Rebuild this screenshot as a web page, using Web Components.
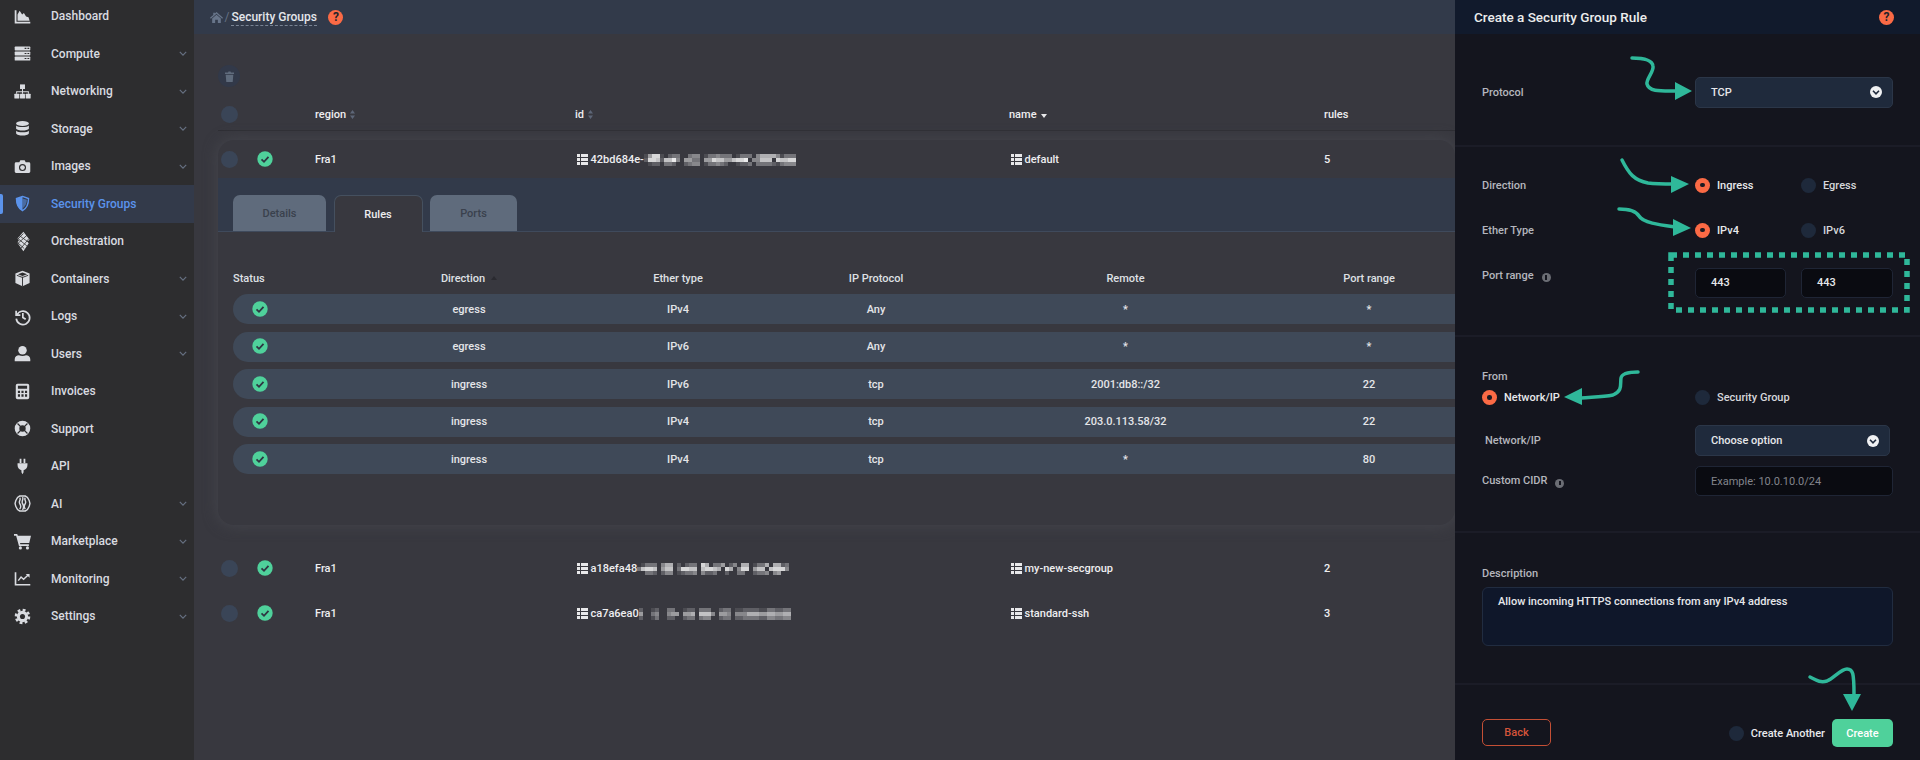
<!DOCTYPE html>
<html>
<head>
<meta charset="utf-8">
<title>Security Groups</title>
<style>
  html, body { margin: 0; background: #38383f; }
  body { font-family: Roboto, "Liberation Sans", sans-serif; overflow: hidden; }
</style>
</head>
<body>
<app-shell></app-shell>
<script>
const ICONS = {
  dashboard: '<path d="M1 3h2.500v16.500H23V22H1z"/><path d="M5 18V9l3-5 3.500 5 2.500-2 3 5 3.500 1 1.500 5z"/>',
  compute: '<rect x="1" y="2" width="22" height="5.600" rx="1"/><rect x="1" y="9.200" width="22" height="5.600" rx="1"/><rect x="1" y="16.400" width="22" height="5.600" rx="1"/><path fill="#2d2d2f" d="M15 4h2.500v1.500H15zM19 4h2.500v1.500H19zM15 11.200h2.500v1.500H15zM19 11.200h2.500v1.500H19zM15 18.400h2.500v1.500H15zM19 18.400h2.500v1.500H19z"/>',
  networking: '<rect x="8.500" y="2" width="7" height="6.500"/><path d="M11.300 8h1.400v3.500h8.300V15h-1.400v-2.100h-6.900V15h-1.400v-2.100H4.400V15H3v-3.500h8.300z"/><rect x=".5" y="15" width="7" height="7" rx=".8"/><rect x="8.500" y="15" width="7" height="7" rx=".8"/><rect x="16.500" y="15" width="7" height="7" rx=".8"/>',
  storage: '<ellipse cx="12" cy="5" rx="9" ry="3.600"/><path d="M3 7.800c2 3 16 3 18 0v4.700c-2 3.300-16 3.300-18 0z"/><path d="M3 15c2 3 16 3 18 0v4c-2 4-16 4-18 0z"/>',
  images: '<path fill-rule="evenodd" d="M3 6h4.500L9 3h6l1.500 3H21a2 2 0 012 2v11a2 2 0 01-2 2H3a2 2 0 01-2-2V8a2 2 0 012-2zm9 2.500a5 5 0 100 10 5 5 0 000-10z"/><circle cx="12" cy="13.500" r="3.300"/>',
  shield: '<path fill="none" stroke="currentColor" stroke-width="2" d="M12 2l8.500 3c0 7.500-1.500 13.500-8.500 17C5 18.500 3.500 12.500 3.500 5z"/><path d="M12 2L3.500 5C3.500 12.500 5 18.500 12 22z"/><path d="M12 5v14c4.500-3 6-7.500 6.200-12.200z" opacity=".55"/>',
  orchestration: '<g transform="translate(12 12) scale(1.25) translate(-12 -12)"><path d="M13 1l7 9-2.500 2 1.500 2-6 9-7-10 2-2-2-2z"/><path fill="none" stroke="#2d2d2f" stroke-width=".9" d="M6 8l11 9M8 5l11 8M5 12l9 8M17 5l-10 9M19 9l-9 11M13 3L5 11"/></g>',
  containers: '<path fill-rule="evenodd" d="M12 1l10 4v13.500L12 23 2 18.500V5zM12 3.500L5.500 6 12 8.500 18.500 6z"/><path fill="none" stroke="#2d2d2f" stroke-width="1.300" d="M12 9.500V23M4 7.500l8 3 8-3"/>',
  logs: '<g fill="none" stroke="currentColor" stroke-width="2.400"><path d="M3 4v6h6"/><path d="M4 10a9.500 9.500 0 11-.8 5"/><path d="M12.500 7v6.500l4 2.500"/></g>',
  users: '<circle cx="12" cy="7.500" r="6"/><path d="M1 23v-3c0-3.500 3-5.500 6-5.500 3 1.500 7 1.500 10 0 3 0 6 2 6 5.500v3z"/>',
  invoices: '<path fill-rule="evenodd" d="M5 1h14a2.500 2.500 0 012.500 2.500v17A2.500 2.500 0 0119 23H5a2.500 2.500 0 01-2.500-2.500v-17A2.500 2.500 0 015 1zm.5 3v4h13V4zm0 7v3h3v-3zm5 0v3h3v-3zm5 0v3h3v-3zm-10 5v3.500h3V16zm5 0v3.500h3V16zm5 0v3.500h3V16z"/>',
  support: '<path fill-rule="evenodd" d="M12 1a11 11 0 110 22 11 11 0 010-22zm0 6.500a4.500 4.500 0 100 9 4.500 4.500 0 000-9z"/><path fill="none" stroke="#2d2d2f" stroke-width="1.800" d="M5 5l4 4M19 5l-4 4M5 19l4-4M19 19l-4-4"/>',
  api: '<path d="M8 1h2.500v6H8zM13.500 1H16v6h-2.500zM5 7.500h14V10c0 4-2.500 6.500-5.500 7.300V20L12 23l-1.500-3v-2.700C7.500 16.500 5 14 5 10z"/>',
  ai: '<g fill="none" stroke="currentColor" stroke-width="2"><path d="M8 1.500h8l3 2 2.500 4.500 1 4-1 4-2.500 4.500-3 2H8l-3-2-2.500-4.500-1-4 1-4L5 3.500z"/><path d="M8 4c2.500 2.500-2 5 0 8s2.500 5 0 8M12 3c2 3-2 6 0 9s2 6 0 9M16 4c-2.500 2.500 2 5 0 8s-2.500 5 0 8"/></g>',
  marketplace: '<path d="M0 1.500h4.500L5.500 4H24l-2.500 10H8.500l.4 2H21v2.300H7L3 3.800H0z"/><circle cx="9" cy="21" r="2.200"/><circle cx="19" cy="21" r="2.200"/>',
  monitoring: '<path d="M1 3h2.300v16.700H23V22H1z"/><path fill="none" stroke="currentColor" stroke-width="2" d="M6 15l4-5 3.500 3L20 7"/><path d="M16.500 5.500H22V11z"/>',
  settings: '<circle cx="12" cy="12" r="8"/><circle cx="12" cy="12" r="9.300" fill="none" stroke="currentColor" stroke-width="3.400" stroke-dasharray="4 3.300"/><circle cx="12" cy="12" r="3.600" fill="#2d2d2f"/>'
}

const NAV = [
  ['dashboard', 'Dashboard', false],
  ['compute', 'Compute', true],
  ['networking', 'Networking', true],
  ['storage', 'Storage', true],
  ['images', 'Images', true],
  ['shield', 'Security Groups', false],
  ['orchestration', 'Orchestration', false],
  ['containers', 'Containers', true],
  ['logs', 'Logs', true],
  ['users', 'Users', true],
  ['invoices', 'Invoices', false],
  ['support', 'Support', false],
  ['api', 'API', false],
  ['ai', 'AI', true],
  ['marketplace', 'Marketplace', true],
  ['monitoring', 'Monitoring', true],
  ['settings', 'Settings', true]
]

class NavItem extends HTMLElement {
  connectedCallback() {
    const shadow = this.attachShadow({ mode: 'open' })
    const chevron = this.hasAttribute('chevron')
      ? '<svg class="chev" viewBox="0 0 10 6"><path d="M1 1l4 4 4-4" fill="none" stroke="currentColor" stroke-width="1.500"/></svg>'
      : ''
    shadow.innerHTML = `
      <style>
        :host { display: flex; align-items: center; height: 37.5px; position: relative; color: #d9dbe0; font-size: 12px; font-weight: 500; }
        :host([active]) { background: #333a4a; color: #5b93ec; }
        :host([active])::before { content: ""; position: absolute; left: 0; top: 9px; width: 2.500px; height: 20px; background: #5b93ec; border-radius: 0 2px 2px 0; }
        .icon { width: 17px; height: 17px; margin-left: 14px; fill: currentColor; flex: none; overflow: visible; }
        .label { margin-left: 20px; flex: 1; }
        .chev { width: 8px; height: 5px; margin-right: 7px; color: #667082; overflow: visible; }
      </style>
      <svg class="icon" viewBox="0 0 24 24">${ICONS[this.getAttribute('icon')]}</svg>
      <span class="label"><slot></slot></span>
      ${chevron}`
  }
}
customElements.define('nav-item', NavItem)

class SideNav extends HTMLElement {
  connectedCallback() {
    const shadow = this.attachShadow({ mode: 'open' })
    shadow.innerHTML = `
      <style>
        :host { display: block; background: #2d2d2f; overflow: hidden; }
        .list { margin-top: -2.500px; }
      </style>
      <div class="list">
        ${NAV.map(n => `<nav-item icon="${n[0]}" ${n[2] ? 'chevron' : ''} ${n[0] === 'shield' ? 'active' : ''}>${n[1]}</nav-item>`).join('')}
      </div>`
  }
}
customElements.define('side-nav', SideNav)

// the small round things: check mark, select circle, radio, help
class CheckDot extends HTMLElement {
  connectedCallback() {
    this.attachShadow({ mode: 'open' }).innerHTML = `
      <style>:host { display: block; width: 16px; height: 16px; } svg { display: block; }</style>
      <svg viewBox="0 0 16 16" width="16" height="16"><circle cx="8" cy="8" r="7.700" fill="#4fd19b"/><path d="M4.500 8.300l2.500 2.500 4.500-5" fill="none" stroke="#2f3542" stroke-width="1.800"/></svg>`
  }
}
customElements.define('check-dot', CheckDot)

class PickDot extends HTMLElement {
  connectedCallback() {
    this.attachShadow({ mode: 'open' }).innerHTML = `
      <style>:host { display: block; width: 17px; height: 17px; border-radius: 50%; background: #3a4557; flex: none; }</style>`
  }
}
customElements.define('pick-dot', PickDot)

class RadioDot extends HTMLElement {
  connectedCallback() {
    this.attachShadow({ mode: 'open' }).innerHTML = `
      <style>
        :host { display: flex; align-items: center; justify-content: center; width: 15px; height: 15px; border-radius: 50%; background: #1e293b; flex: none; }
        :host([on]) { background: #fb6a45; }
        :host([on])::after { content: ""; width: 4.500px; height: 4.500px; border-radius: 50%; background: #1a1a22; }
      </style>`
  }
}
customElements.define('radio-dot', RadioDot)

class HelpMark extends HTMLElement {
  connectedCallback() {
    this.attachShadow({ mode: 'open' }).innerHTML = `
      <style>
        :host { display: flex; align-items: center; justify-content: center; width: 15px; height: 15px; border-radius: 50%; background: #fb6a45; color: #23232b; font: 700 12px Roboto, sans-serif; flex: none; }
      </style>?`
  }
}
customElements.define('help-mark', HelpMark)

class InfoMark extends HTMLElement {
  connectedCallback() {
    this.attachShadow({ mode: 'open' }).innerHTML = `
      <style>
        :host { display: inline-flex; align-items: center; justify-content: center; width: 9px; height: 9px; border-radius: 50%; background: #6b6d74; margin-left: 8px; vertical-align: -1px; }
        :host::after { content: ""; width: 1.500px; height: 4.500px; background: #14151e; }
      </style>`
  }
}
customElements.define('info-mark', InfoMark)

// pixelated part of an id: one string per row, a digit is the brightness of one block
class BlurBits extends HTMLElement {
  connectedCallback() {
    const rows = this.getAttribute('rows').split(',')
    let rects = ''
    rows.forEach((row, y) => {
      row.split('').forEach((d, x) => {
        if (d !== '0') rects += `<rect x="${x * 4}" y="${y * 4}" width="4" height="4" fill="#fff" opacity="${Number(d) / 10}"/>`
      })
    })
    const w = rows[0].length * 4
    this.attachShadow({ mode: 'open' }).innerHTML = `
      <style>:host { display: block; flex: none; height: 12px; } svg { display: block; }</style>
      <svg width="${w}" height="12" viewBox="0 0 ${w} 12" shape-rendering="crispEdges">${rects}</svg>`
  }
}
customElements.define('blur-bits', BlurBits)

const GRID_ICON = '<svg width="11" height="11" viewBox="0 0 11 11" fill="#e8e8ea" style="flex:none"><path d="M0 0h3v3H0zM4 0h7v3H4zM0 4h3v3H0zM4 4h7v3H4zM0 8h3v3H0zM4 8h7v3H4z"/></svg>'

class IdCell extends HTMLElement {
  connectedCallback() {
    this.attachShadow({ mode: 'open' }).innerHTML = `
      <style>:host { display: flex; align-items: center; gap: 3px; margin: 1px 0 0 1.500px; } </style>
      ${GRID_ICON}<slot></slot>`
  }
}
customElements.define('id-cell', IdCell)

const ROW_STYLE = `
  :host { display: grid; grid-template-columns: 39px 58px 260px 434px 315px 1fr; align-items: center; color: #eeeef0; font-size: 11px; font-weight: 500; }
  pick-dot { margin-left: 3px; }
`

class SgRow extends HTMLElement {
  connectedCallback() {
    const name = this.getAttribute('name')
    this.attachShadow({ mode: 'open' }).innerHTML = `
      <style>${ROW_STYLE}
        :host { height: 45px; }
        .id { display: flex; align-items: center; }
      </style>
      <pick-dot></pick-dot>
      <check-dot></check-dot>
      <span>Fra1</span>
      <id-cell><span class="id">${this.getAttribute('uid')}<blur-bits rows="${this.getAttribute('bits')}"></blur-bits></span></id-cell>
      <id-cell><span>${name}</span></id-cell>
      <span>${this.getAttribute('rules')}</span>`
  }
}
customElements.define('sg-row', SgRow)

class SgHead extends HTMLElement {
  connectedCallback() {
    const sort = '<svg width="5" height="9" viewBox="0 0 5 9" fill="#5d6678"><path d="M2.500 0L5 3.500H0zM2.500 9L5 5.500H0z"/></svg>'
    this.attachShadow({ mode: 'open' }).innerHTML = `
      <style>${ROW_STYLE}
        :host { height: 44px; padding-top: 12px; box-sizing: border-box; border-bottom: 1px solid #2e2e34; }
        .h { display: flex; align-items: center; gap: 4px; }
      </style>
      <pick-dot></pick-dot><span></span>
      <span class="h">region ${sort}</span>
      <span class="h">id ${sort}</span>
      <span class="h">name <svg width="6" height="4" viewBox="0 0 6 4" fill="#e8e8ea" style="margin-top:3px"><path d="M0 0h6L3 4z"/></svg></span>
      <span class="h">rules</span>`
  }
}
customElements.define('sg-head', SgHead)

const RULE_COLS = 'grid-template-columns: 127px 218px 200px 196px 303px 184px'

class RuleRow extends HTMLElement {
  connectedCallback() {
    const cells = this.getAttribute('cells').split('|')
    this.attachShadow({ mode: 'open' }).innerHTML = `
      <style>
        :host { display: grid; ${RULE_COLS}; align-items: center; height: 30px; margin-bottom: 7.500px; background: #3f4958; border-radius: 15px 0 0 15px; color: #e4e5e8; font-size: 11px; font-weight: 500; text-align: center; }
        check-dot { margin-left: 18.500px; margin-top: -1px; }
      </style>
      <check-dot></check-dot>
      ${cells.map(c => `<span>${c}</span>`).join('')}`
  }
}
customElements.define('rule-row', RuleRow)

class TabBar extends HTMLElement {
  connectedCallback() {
    this.attachShadow({ mode: 'open' }).innerHTML = `
      <style>
        :host { display: flex; align-items: flex-end; gap: 7.500px; height: 54px; padding-left: 15px; background: #323a4a; border-bottom: 1px solid #3f4a5c; box-sizing: border-box; font-size: 11px; font-weight: 500; }
        .t { display: flex; align-items: center; justify-content: center; height: 36px; background: #5f6b7c; color: #3a414d; border-radius: 7px 7px 0 0; box-sizing: border-box; }
        .on { background: #38383f; color: #eeeef0; border: 1px solid #45505f; border-bottom: 0; height: 37px; margin-bottom: -1px; }
      </style>
      <span class="t" style="width:93px">Details</span>
      <span class="t on" style="width:89px">Rules</span>
      <span class="t" style="width:87px">Ports</span>`
  }
}
customElements.define('tab-bar', TabBar)

class SgCard extends HTMLElement {
  connectedCallback() {
    this.attachShadow({ mode: 'open' }).innerHTML = `
      <style>
        :host { display: block; height: 385px; margin-top: 9px; border-radius: 16px; background: #38383f; box-shadow: 0 0 14px 1px #44454c; overflow: hidden; }
        sg-row { height: 38px; }
        .head { display: grid; ${RULE_COLS}; margin: 38px 0 0 15px; height: 16px; align-items: center; color: #dfe0e4; font-size: 11px; font-weight: 500; text-align: center; }
        .head span:first-child { text-align: left; }
        .dir { display: inline-flex; align-items: center; gap: 6px; }
        .rows { margin: 8px 0 0 15px; }
      </style>
      <sg-row uid="42bd684e-" name="default" rules="5" bits="15881023300344013343330133304666641333,28872779405533055877557889044777087788,01220332002344013343200122303333213444"></sg-row>
      <tab-bar></tab-bar>
      <div class="head">
        <span>Status</span>
        <span><span class="dir">Direction <svg width="6" height="4" viewBox="0 0 6 4" fill="#2a2a30"><path d="M3 0l3 4H0z"/></svg></span></span>
        <span>Ether type</span><span>IP Protocol</span><span>Remote</span><span>Port range</span>
      </div>
      <div class="rows">
        <rule-row cells="egress|IPv4|Any|*|*"></rule-row>
        <rule-row cells="egress|IPv6|Any|*|*"></rule-row>
        <rule-row cells="ingress|IPv6|tcp|2001:db8::/32|22"></rule-row>
        <rule-row cells="ingress|IPv4|tcp|203.0.113.58/32|22"></rule-row>
        <rule-row cells="ingress|IPv4|tcp|*|80"></rule-row>
      </div>`
  }
}
customElements.define('sg-card', SgCard)

class SgMain extends HTMLElement {
  connectedCallback() {
    this.attachShadow({ mode: 'open' }).innerHTML = `
      <style>
        :host { display: block; background: #38383f; overflow: hidden; min-width: 0; }
        .bar { display: flex; align-items: center; height: 34px; background: #323a4a; padding-left: 15.500px; color: #e4e6ea; font-size: 12px; font-weight: 500; box-sizing: border-box; }
        .sl { color: #667184; margin: 0 2px; font-weight: 400; }
        .here { border-bottom: 1px dashed #7a8494; line-height: 15px; margin-top: 2px; }
        help-mark { margin-left: 11.500px; }
        .body { padding-left: 24px; }
        .trash { display: flex; align-items: center; justify-content: center; width: 22px; height: 22px; margin-top: 31px; border-radius: 50%; background: #323949; }
        .lower { margin-top: 20.500px; }
      </style>
      <div class="bar">
        <svg width="13" height="11" viewBox="0 0 24 20" fill="#68758a"><path d="M12 0l12 10.500-1.500 1.700L12 3 1.500 12.200 0 10.500l6-5.200V1h3v1.700z"/><path d="M12 5l8 7v8h-5.500v-6h-5v6H4v-8z"/></svg>
        <span class="sl">/</span><span class="here">Security Groups</span>
        <help-mark></help-mark>
      </div>
      <div class="body">
        <div class="trash"><svg width="9" height="11" viewBox="0 0 9 11" fill="#5f6b7c"><path d="M0 1.500h3L3.500 .5h2L6 1.500h3V3H0zM.7 3.700h7.600L7.700 11H1.300z"/></svg></div>
        <sg-head></sg-head>
        <sg-card></sg-card>
        <div class="lower">
          <sg-row uid="a18efa48" name="my-new-secgroup" rules="2" bits="01333046602023308603350240660133606623,37887057703887707887608604880577078884,00332024401233404223002003300233404500"></sg-row>
          <sg-row uid="ca7a6ea0" name="standard-ssh" rules="3" bits="20012003300122033300233011222211332233,50034004550556077740554044466655665566,20013002200233034400233022333322443344"></sg-row>
        </div>
      </div>`
  }
}
customElements.define('sg-main', SgMain)

class SelectBox extends HTMLElement {
  connectedCallback() {
    this.attachShadow({ mode: 'open' }).innerHTML = `
      <style>
        :host { display: flex; align-items: center; height: 31px; padding: 0 10px 0 15px; box-sizing: border-box; background: #1f2a3c; border: 1px solid #2b3648; border-radius: 5px; color: #e6e7ea; font-size: 11px; font-weight: 500; }
        span { flex: 1; }
        svg { display: block; }
      </style>
      <span><slot></slot></span>
      <svg width="12" height="12" viewBox="0 0 12 12"><circle cx="6" cy="6" r="6" fill="#f0f1f3"/><path d="M3 4.800l3 3 3-3" fill="none" stroke="#1f2a3c" stroke-width="1.600"/></svg>`
  }
}
customElements.define('select-box', SelectBox)

class TextBox extends HTMLElement {
  connectedCallback() {
    this.attachShadow({ mode: 'open' }).innerHTML = `
      <style>
        :host { display: flex; align-items: center; height: 30px; padding-left: 15px; box-sizing: border-box; background: #0a0b11; border: 1px solid #1f2535; border-radius: 5px; color: #e6e7ea; font-size: 11px; font-weight: 500; }
        :host([muted]) { color: #83858c; font-weight: 400; }
      </style>
      <slot></slot>`
  }
}
customElements.define('text-box', TextBox)

class RadioLine extends HTMLElement {
  connectedCallback() {
    this.attachShadow({ mode: 'open' }).innerHTML = `
      <style>
        :host { display: flex; align-items: center; gap: 7px; color: #d6d7db; font-size: 11px; font-weight: 500; }
        :host([on]) { color: #e8e9ec; }
      </style>
      <radio-dot ${this.hasAttribute('on') ? 'on' : ''}></radio-dot><span><slot></slot></span>`
  }
}
customElements.define('radio-line', RadioLine)

class RulePanel extends HTMLElement {
  connectedCallback() {
    this.attachShadow({ mode: 'open' }).innerHTML = `
      <style>
        :host { display: block; position: relative; background: #14151e; color: #b4b6bd; font-size: 11px; font-weight: 500; overflow: hidden; }
        header { display: flex; align-items: center; justify-content: space-between; height: 34px; padding: 0 26px 0 19px; background: #111a2c; color: #eceded; font-size: 13.500px; font-weight: 500; }
        section { padding: 0 27px; box-sizing: border-box; border-top: 2px solid #1b1c27; }
        .s1 { height: 111px; border-top: 0; padding-top: 42.500px; display: grid; grid-template-columns: 213px 1fr; align-items: center; align-content: start; }
        .s2 { height: 190px; padding-top: 23px; display: grid; grid-template-columns: 213px 106px 1fr; grid-template-rows: 30px 30px 30px; row-gap: 15px; align-items: center; align-content: start; }
        .port { align-self: start; line-height: 14px; margin-top: 8.500px; }
        .s2 text-box { margin-top: 15px; }
        .s3 { height: 196px; padding-top: 33px; }
        .from { line-height: 14px; }
        .pick { display: grid; grid-template-columns: 213px 1fr; margin-top: 6px; }
        .net { display: grid; grid-template-columns: 213px 1fr; grid-template-rows: 31px 30px; row-gap: 10px; align-items: center; margin-top: 20px; }
        .net select-box { width: 195px; box-sizing: border-box; }
        .s4 { height: 152px; padding-top: 34px; }
        .box { height: 59px; margin-top: 7px; padding: 7px 15px; box-sizing: border-box; background: #0f172a; border: 1px solid #212c40; border-radius: 6px; color: #e6e7ea; line-height: 14px; }
        .s5 { display: flex; align-items: flex-start; justify-content: flex-end; height: 77px; padding-top: 34px; }
        .back { width: 69px; height: 27px; margin-right: auto; display: flex; align-items: center; justify-content: center; box-sizing: border-box; border: 1px solid #c44f35; border-radius: 5px; color: #d4543a; }
        .create { width: 61px; height: 28px; margin-left: 7px; display: flex; align-items: center; justify-content: center; background: #4fd19b; border-radius: 5px; color: #fff; }
        radio-line.another { height: 28px; color: #e8e9ec; }
        svg.ink { position: absolute; left: 0; top: 0; pointer-events: none; }
      </style>
      <header><span>Create a Security Group Rule</span><help-mark></help-mark></header>
      <section class="s1"><span>Protocol</span><select-box style="width:198px">TCP</select-box></section>
      <section class="s2">
        <span>Direction</span><radio-line on>Ingress</radio-line><radio-line>Egress</radio-line>
        <span>Ether Type</span><radio-line on>IPv4</radio-line><radio-line>IPv6</radio-line>
        <span class="port">Port range<info-mark></info-mark></span><text-box style="width:91px">443</text-box><text-box>443</text-box>
      </section>
      <section class="s3">
        <div class="from">From</div>
        <div class="pick"><radio-line on>Network/IP</radio-line><radio-line>Security Group</radio-line></div>
        <div class="net">
          <span style="padding-left:3px">Network/IP</span><select-box>Choose option</select-box>
          <span>Custom CIDR<info-mark></info-mark></span><text-box muted>Example: 10.0.10.0/24</text-box>
        </div>
      </section>
      <section class="s4"><div>Description</div><div class="box">Allow incoming HTTPS connections from any IPv4 address</div></section>
      <section class="s5">
        <span class="back">Back</span>
        <radio-line class="another">Create Another</radio-line>
        <span class="create">Create</span>
      </section>
      <svg class="ink" width="465" height="760" viewBox="1455 0 465 760" fill="#2fb89a">
        <g fill="none" stroke="#2fb89a" stroke-width="3.500" stroke-linecap="round">
          <path d="M1632 58c8 0 20 1 21 8 1 6-7 13-6 18 2 8 14 7 30 7"/>
          <path d="M1622 160c7 14 12 20 26 23 8 1 16 1 26 1"/>
          <path d="M1619 209c10 0 17 2 20 7 4 7 22 9 37 11"/>
          <path d="M1638 372c-8 0-16 1-17 6-1 6 2 13-8 17-10 2-20 2-32 3"/>
          <path d="M1810 677c6 3 10 6 17 4 7-3 14-12 20-12 6 0 7 4 7 26"/>
        </g>
        <path d="M1675 82l17 9-17 9zM1671 176l18 8-18 9zM1673 219l18 9-18 8zM1582 388l-18 9 18 8zM1843 694h18l-9 17z"/>
        <rect x="1671" y="255" width="236" height="55" fill="none" stroke="#2fb89a" stroke-width="5.500" stroke-dasharray="6 6"/>
      </svg>`
  }
}
customElements.define('rule-panel', RulePanel)

class AppShell extends HTMLElement {
  connectedCallback() {
    this.attachShadow({ mode: 'open' }).innerHTML = `
      <style>
        :host { display: grid; grid-template-columns: 194px 1fr 465px; width: 1920px; height: 760px; overflow: hidden; font-family: Roboto, "Liberation Sans", sans-serif; }
      </style>
      <side-nav></side-nav><sg-main></sg-main><rule-panel></rule-panel>`
  }
}
customElements.define('app-shell', AppShell)
</script>
</body>
</html>
